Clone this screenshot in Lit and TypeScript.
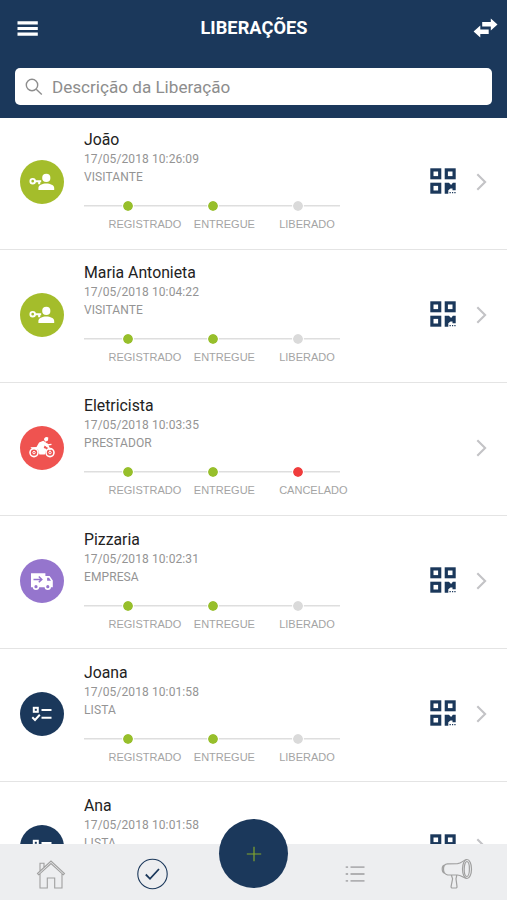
import { LitElement, html, css, svg, nothing } from "lit";
import { customElement, property } from "lit/decorators.js";
import { classMap } from "lit/directives/class-map.js";

type Kind = "visitante" | "prestador" | "empresa" | "lista";
interface Step { label: string; state: "done" | "pending" | "cancelled"; }
interface Release { name: string; date: string; kind: Kind; qr: boolean; last: Step; }

const pending: Step = { label: "LIBERADO", state: "pending" };
const releases: Release[] = [
  { name: "João", date: "17/05/2018 10:26:09", kind: "visitante", qr: true, last: pending },
  { name: "Maria Antonieta", date: "17/05/2018 10:04:22", kind: "visitante", qr: true, last: pending },
  { name: "Eletricista", date: "17/05/2018 10:03:35", kind: "prestador", qr: false, last: { label: "CANCELADO", state: "cancelled" } },
  { name: "Pizzaria", date: "17/05/2018 10:02:31", kind: "empresa", qr: true, last: pending },
  { name: "Joana", date: "17/05/2018 10:01:58", kind: "lista", qr: true, last: pending },
  { name: "Ana", date: "17/05/2018 10:01:58", kind: "lista", qr: true, last: pending },
];

const glyphs = {
  visitante: svg`
    <circle cx="26.3" cy="17.9" r="4.1" fill="#fff"/>
    <path d="M18.4 30v-2c0-3 4-4.6 7.9-4.6s7.9 1.6 7.9 4.6v2z" fill="#fff"/>
    <circle cx="12.7" cy="21.2" r="2.3" fill="none" stroke="#fff" stroke-width="1.9"/>
    <path d="M15 21.2h6.2M19.2 21.2v3" fill="none" stroke="#fff" stroke-width="2.1"/>`,
  prestador: svg`
    <g fill="none" stroke="#fff">
      <circle cx="14" cy="26.6" r="4" stroke-width="1.6"/>
      <circle cx="30" cy="26.6" r="4" stroke-width="1.6"/>
      <circle cx="14" cy="26.6" r="1.2" stroke-width="1"/>
      <circle cx="30" cy="26.6" r="1.2" stroke-width="1"/>
      <path d="M26.5 17.2l3.800 7.200M25 19.200l6.500-.8" stroke-width="1.4"/>
    </g>
    <path d="M10.500 21.200l6-.2 2.600-4.600 4.200-1.600 2.600 1.700 2.800 4.300-1.300 1-2.700-2.400-1 2.700 2.800.8-1.700 5.500h-5.400l-1.400-4.600-6.800-1.600z" fill="#fff"/>
    <path d="M24 13.800a2.700 2.700 0 0 1 4.300-2.300l-.3 3-2.500 1.200z" fill="#fff"/>`,
  empresa: svg`
    <path d="M11 14.3h14.4v2.800h4.2l3.2 4.5v6.6H11z" fill="#fff"/>
    <path d="M27.1 18.7h1.9l2 3h-3.900z" fill="#9575cd"/>
    <path d="M13.500 20.4h8M18.8 17.5l3 2.900-3 2.900" fill="none" stroke="#9575cd" stroke-width="1.5"/>
    <circle cx="16" cy="27.7" r="2.4" fill="#9575cd" stroke="#fff" stroke-width="1.6"/>
    <circle cx="27.8" cy="27.7" r="2.4" fill="#9575cd" stroke="#fff" stroke-width="1.6"/>`,
  lista: svg`
    <g fill="none" stroke="#fff" stroke-width="2">
      <rect x="13.8" y="15.8" width="4" height="4"/>
      <path d="M21.5 18.1h10M21.5 25.7h10M12.3 25.3l2.700 2.700 4.800-5.200"/>
    </g>`,
};

@customElement("release-row")
class ReleaseRow extends LitElement {
  @property({ attribute: false }) item!: Release;

  static styles = css`
    :host { display: grid; grid-template-columns: 84px 1fr 46px 31px; box-sizing: border-box;
      height: 133.2px; border-bottom: 1px solid #e4e4e4; background: #fff; }
    .avatar { width: 44px; height: 44px; border-radius: 50%; margin: 43px 0 0 20.4px; }
    .avatar svg { display: block; }
    .visitante { background: #a4bd2b; }
    .prestador { background: #ef5350; }
    .empresa { background: #9575cd; }
    .lista { background: #1b385b; }
    .body { padding-top: 12.6px; width: 256px; }
    .name { font-size: 15.8px; line-height: 22px; color: #222; white-space: nowrap; }
    .date, .type { font-size: 12px; color: #949494; white-space: nowrap; }
    .date { line-height: 17px; letter-spacing: .1px; }
    .type { line-height: 19px; letter-spacing: .1px; }
    .steps { display: flex; margin-top: 13px; background: linear-gradient(#dedede, #dedede) 0 5px / 100% 1.5px no-repeat; }
    .step { flex: 1 1 0; min-width: 0; }
    .dot { width: 10px; height: 10px; margin-left: 37.8px; border: 1px solid #fff; border-radius: 50%;
      background: #dadada; background-clip: padding-box; }
    .done { background-color: #97bf2b; }
    .cancelled { background-color: #f03c3c; }
    .label { padding: 5px 0 0 24.5px; font: 11px/15px "Liberation Sans", Arial, sans-serif; color: #a4a4a4; white-space: nowrap; }
    .qr { margin-top: 51.2px; }
    .chevron { margin-top: 56px; }
  `;

  render() {
    const { name, date, kind, qr, last } = this.item;
    const steps: Step[] = [{ label: "REGISTRADO", state: "done" }, { label: "ENTREGUE", state: "done" }, last];
    return html`
      <div class=${classMap({ avatar: true, [kind]: true })}>
        <svg width="44" height="44" viewBox="0 0 44 44">${glyphs[kind]}</svg>
      </div>
      <div class="body">
        <div class="name">${name}</div>
        <div class="date">${date}</div>
        <div class="type">${kind.toUpperCase()}</div>
        <div class="steps">
          ${steps.map((s) => html`<div class="step">
            <div class=${classMap({ dot: true, [s.state]: true })}></div>
            <div class="label">${s.label}</div>
          </div>`)}
        </div>
      </div>
      <div class="qr">${qr ? html`
        <svg width="26" height="26" viewBox="0 0 26 26">
          <g fill="none" stroke="#1b385b" stroke-width="3.2">
            <rect x="1.9" y="1.9" width="7.8" height="7.8"/>
            <rect x="16.3" y="1.9" width="7.8" height="7.8"/>
            <rect x="1.9" y="16.3" width="7.8" height="7.8"/>
          </g>
          <path d="M14.7 14.7h4.2l2.200 2.300 1.800-2.300h2.800v7.600h-3.200v-1.800h-2l-2.200 1.800v3.400h-3.600z" fill="#1b385b"/>
          <path d="M19.5 23.900h1.300v1.400h-1.300zM22 23.900h1.200v1.400H22zM24.3 23.900h1.300v1.400h-1.300z" fill="#1b385b"/>
        </svg>` : nothing}</div>
      <div class="chevron">
        <svg width="12" height="18" viewBox="0 0 12 18"><path d="M1.300 1.300L9.100 9 1.300 16.700" fill="none" stroke="#c3c3c6" stroke-width="2.100"/></svg>
      </div>`;
  }
}

@customElement("app-root")
class AppRoot extends LitElement {
  static styles = css`
    :host { display: flex; flex-direction: column; height: 900px; overflow: hidden; background: #fff;
      font-family: Roboto, "Liberation Sans", sans-serif; }
    header { height: 118px; flex: none; box-sizing: border-box; background: #1b385b; z-index: 1; }
    .bar { display: grid; grid-template-columns: 40px 1fr 40px; align-items: center; height: 56px; padding: 0 9px 0 17px; }
    .bar svg { display: block; }
    .swap { justify-self: end; }
    h1 { margin: 0; text-align: center; font-size: 18.2px; line-height: 24px; font-weight: 700; color: #fff; letter-spacing: .05px; padding-right: 7px; }
    .search { display: flex; align-items: center; gap: 9px; box-sizing: border-box; height: 37px; margin: 12px 15px 0;
      padding-left: 10px; background: #fff; border-radius: 5px; font-size: 17.100px; color: #8d8d8d; }
    .list { flex: 1; min-height: 0; overflow: hidden; margin-top: -1.5px; }
    nav { flex: none; height: 56px; display: grid; grid-template-columns: repeat(5, 1fr); justify-items: center; background: #edeef0; }
    nav svg { display: block; margin-top: 13px; }
    .fab { width: 69px; height: 69px; margin: -25px 0 0 1px; border-radius: 50%; background: #1b385b; display: grid; place-items: center; z-index: 1; }
    nav .fab svg { margin: 0; }
    .horn { margin-left: 1px; }
  `;

  render() {
    return html`
      <header>
        <div class="bar">
          <svg width="21" height="15" viewBox="0 0 21 15"><path d="M.5 1.9h20.300M.5 7.500h20.300M.5 13.100h20.300" stroke="#fff" stroke-width="3.200"/></svg>
          <h1>LIBERAÇÕES</h1>
          <svg class="swap" width="25" height="20" viewBox="0 0 25 20"><path d="M9.200 4.100h8.600V.5l6.700 6-6.700 6V8.500H9.200zM15.700 15.900H7.300v3.700L.6 13.600l6.700-6v3.900h8.400z" fill="#fff"/></svg>
        </div>
        <div class="search">
          <svg width="18" height="18" viewBox="0 0 18 18" fill="none" stroke="#8d8d8d" stroke-width="1.400"><circle cx="7" cy="7" r="5.700"/><path d="M11.200 11.200l5.600 5.400"/></svg>
          <span>Descrição da Liberação</span>
        </div>
      </header>
      <div class="list">${releases.map((r) => html`<release-row .item=${r}></release-row>`)}</div>
      <nav>
        <svg width="30" height="34" viewBox="0 0 30 34" fill="none" stroke="#a0a0a0" stroke-width="1.100">
          <path d="M1.500 16.500L15 4l13.500 12.500-1.200 1.300L15 6.500 2.700 17.800zM4 17v14h7.300V21h7.400v10H26V17M4 13.700V6.300h4v3.700"/>
        </svg>
        <svg width="32" height="34" viewBox="0 0 32 34" fill="none" stroke="#1b385b">
          <circle cx="16.500" cy="17" r="14.700" stroke-width="1.100"/><path d="M9.800 17.500l4.200 4.300L23 12" stroke-width="1.800"/>
        </svg>
        <div class="fab"><svg width="16" height="16" viewBox="0 0 16 16"><path d="M8 .8v14.400M.8 8h14.400" stroke="#83a52d" stroke-width="1.200"/></svg></div>
        <svg width="20" height="34" viewBox="0 0 20 34" stroke="#b0b0b2" stroke-width="1.800">
          <path d="M.7 10.100h2.400M5.500 10.100h14M.7 17h2.400M5.500 17h14M.7 23.900h2.400M5.500 23.900h14"/>
        </svg>
        <svg class="horn" width="32" height="34" viewBox="0 0 32 34" fill="none" stroke="#a0a0a0" stroke-width="1.200">
          <ellipse cx="26" cy="12" rx="4.500" ry="9.500"/><ellipse cx="25.800" cy="12" rx="2.600" ry="7.500"/>
          <path d="M26 2.500c-3.500 0-5 4-9.500 4.200L6.500 6.900C4 7 2.500 9 2.500 12s1.700 5.700 4 5.800l10 .2c4 0 6 3.500 9.500 3.500M4.500 7.800c-2.500.2-3.300 2.200-3.300 4.200s1 4 3.300 4.600M10.300 18l1.300 3.800-1.500 7.500c-.2 1.200.4 1.700 1.500 1.700h3c1 0 1.500-.5 1.400-1.500l-1-7.700.8-3.600"/>
        </svg>
      </nav>`;
  }
}
